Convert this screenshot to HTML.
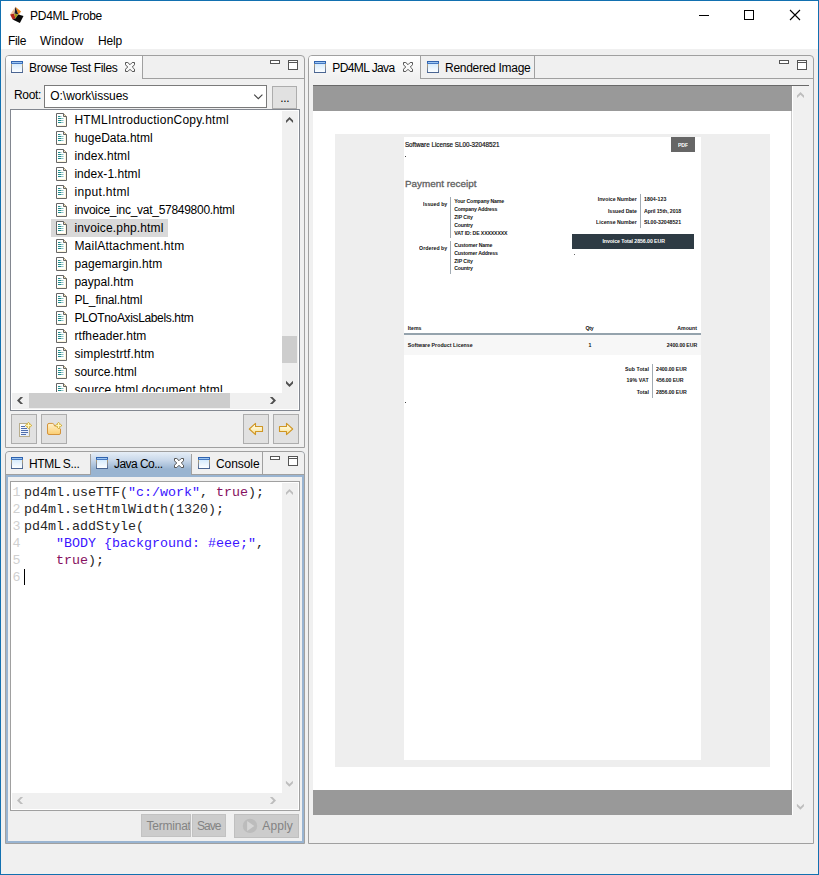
<!DOCTYPE html>
<html>
<head>
<meta charset="utf-8">
<title>PD4ML Probe</title>
<style>
*{box-sizing:border-box;margin:0;padding:0}
html,body{width:819px;height:875px;overflow:hidden;background:#f0f0f0}
body{font-family:"Liberation Sans",sans-serif;font-size:12px;color:#000;position:relative}
.abs{position:absolute}
.t{position:absolute;white-space:pre}
.pg .t{transform:scaleY(1.14)}

</style>
</head>
<body>
<div class="abs" style="left:0px;top:0px;width:819px;height:875px;background:#f0f0f0;"></div>
<div class="abs" style="left:0px;top:0px;width:819px;height:49px;background:#fff;"></div>
<svg class="abs" style="left:8px;top:4px" width="18" height="22" viewBox="8 4 18 22">
<polygon points="15.4,6.8 21.1,11.4 18.3,14.4" fill="#f08a1c"/>
<polygon points="15.4,6.8 18.3,14.4 14.2,13.4" fill="#1a1a26"/>
<polygon points="15.4,6.8 14.2,13.4 10.1,14.4" fill="#ecc09a"/>
<polygon points="10.1,14.4 14.2,13.4 15.4,18.4 12.6,19.4" fill="#b3241c"/>
<polygon points="14.2,13.4 18.3,14.4 15.4,18.4" fill="#a39a14"/>
<polygon points="18.3,14.4 21.1,11.4 19.6,15.0" fill="#ecc9a8"/>
<polygon points="12.6,19.4 15.4,18.4 18.3,14.4 23.5,15.9 19.9,22.9" fill="#080808"/>
</svg>
<div class="t" style="left:30px;top:8.4px;font-size:12px;line-height:16px;height:16px;letter-spacing:-0.267px;">PD4ML Probe</div>
<div class="abs" style="left:699px;top:15px;width:10px;height:1px;background:#000;"></div>
<div class="abs" style="left:744px;top:10px;width:10px;height:10px;border:1px solid #000"></div>
<svg class="abs" style="left:789px;top:9px" width="12" height="12" viewBox="0 0 12 12"><path d="M1 1 L11 11 M11 1 L1 11" stroke="#000" stroke-width="1.1" fill="none"/></svg>
<div class="t" style="left:8px;top:33.2px;font-size:12px;line-height:16px;height:16px;letter-spacing:-0.336px;">File</div>
<div class="t" style="left:40px;top:33.2px;font-size:12px;line-height:16px;height:16px;letter-spacing:0.135px;">Window</div>
<div class="t" style="left:98px;top:33.2px;font-size:12px;line-height:16px;height:16px;letter-spacing:-0.172px;">Help</div>
<div class="abs" style="left:5px;top:55px;width:300px;height:393px;background:#f0f0f0;border:1px solid #a0a0a0;border-radius:4px 4px 0 0"></div>
<div class="abs" style="left:6px;top:56px;width:136px;height:23px;background:linear-gradient(#fff,#f0f0f0);border-radius:3px 0 0 0"></div>
<div class="abs" style="left:142px;top:56px;width:1px;height:23px;background:#a0a0a0;"></div>
<div class="abs" style="left:142px;top:78px;width:162px;height:1px;background:#a0a0a0;"></div>
<svg class="abs" style="left:11px;top:61px" width="12" height="12" viewBox="0 0 12 12"><defs><linearGradient id="g11_61a" x1="0" y1="0" x2="0" y2="1"><stop offset="0" stop-color="#d6ebfd"/><stop offset="1" stop-color="#fcfeff"/></linearGradient><linearGradient id="g11_61b" x1="0" y1="0" x2="0" y2="1"><stop offset="0" stop-color="#b9a274"/><stop offset="0.6" stop-color="#6f7f9c"/><stop offset="1" stop-color="#4a6592"/></linearGradient></defs><rect x="0" y="3" width="12" height="9" fill="url(#g11_61b)"/><rect x="1" y="3" width="10" height="8" fill="url(#g11_61a)"/><rect x="0" y="0" width="12" height="3" fill="#2f62ae"/><rect x="1" y="1" width="10" height="1" fill="#9cc6f2"/><rect x="0" y="2" width="12" height="1" fill="#4477c0"/><rect x="0" y="11" width="12" height="1" fill="#4a6592"/></svg>
<div class="t" style="left:29px;top:60px;font-size:12px;line-height:16px;height:16px;letter-spacing:-0.312px;">Browse Test Files</div>
<svg class="abs" style="left:125px;top:62px" width="10" height="10" viewBox="0 0 10 10"><path d="M0.5 0.5 H2.8 L5 2.7 L7.2 0.5 H9.5 V2.8 L7.3 5 L9.5 7.2 V9.5 H7.2 L5 7.3 L2.8 9.5 H0.5 V7.2 L2.7 5 L0.5 2.8 Z" fill="none" stroke="#555" stroke-width="1"/></svg>
<div class="abs" style="left:270px;top:60px;width:10px;height:4px;background:#fff;border:1px solid #555"></div><div class="abs" style="left:288px;top:60px;width:10px;height:10px;background:#fff;border:1px solid #555"></div><div class="abs" style="left:289px;top:62px;width:8px;height:1px;background:#555;"></div>
<div class="t" style="left:14px;top:87.4px;font-size:12px;line-height:16px;height:16px;letter-spacing:-0.338px;">Root:</div>
<div class="abs" style="left:44px;top:85px;width:223px;height:23px;background:#fff;border:1px solid #7a7a7a"></div>
<div class="t" style="left:50.3px;top:88px;font-size:12px;line-height:16px;height:16px;letter-spacing:-0.049px;">O:\work\issues</div>
<svg class="abs" style="left:253px;top:93px" width="11" height="7" viewBox="0 0 11 7"><path d="M1.2 1.6 L5.3 5.7 L9.4 1.6" stroke="#444" stroke-width="1.1" fill="none"/></svg>
<div class="abs" style="left:272px;top:86px;width:25px;height:23px;background:#e1e1e1;border:1px solid #adadad"></div>
<div class="t" style="left:280.3px;top:89.5px;font-size:12px;line-height:16px;height:16px;letter-spacing:-0.339px;">...</div>
<div class="abs" style="left:10px;top:109px;width:290px;height:302px;background:#fff;border:1px solid #828790"></div>
<div class="abs" style="left:11px;top:110px;width:271px;height:282px;overflow:hidden">
<svg class="abs" style="left:45px;top:3px" width="12" height="14" viewBox="0 0 12 14"><path d="M0.5 0.5 H7.5 L10.5 3.5 V13.5 H0.5 Z" fill="#fff" stroke="#666"/><path d="M9.5 4 V12.5 H1.5" fill="none" stroke="#fbf6dc"/><path d="M7.5 0.5 V3.5 H10.5" fill="#f4e2b0" stroke="#666"/><path d="M2 3.5 H4 M2 5.5 H5.5 M2 7.5 H5.5 M2 9.5 H5.5" stroke="#1f8a8a" stroke-width="1"/><path d="M4 3.5 H5.5 M5.5 5.5 H7.5 M5.5 7.5 H7.5 M5.5 9.5 H7.5" stroke="#8cc4c4" stroke-width="1"/></svg>
<div class="t" style="left:63.4px;top:2px;font-size:12px;line-height:16px;height:16px;letter-spacing:0.236px;">HTMLIntroductionCopy.html</div>
<svg class="abs" style="left:45px;top:21px" width="12" height="14" viewBox="0 0 12 14"><path d="M0.5 0.5 H7.5 L10.5 3.5 V13.5 H0.5 Z" fill="#fff" stroke="#666"/><path d="M9.5 4 V12.5 H1.5" fill="none" stroke="#fbf6dc"/><path d="M7.5 0.5 V3.5 H10.5" fill="#f4e2b0" stroke="#666"/><path d="M2 3.5 H4 M2 5.5 H5.5 M2 7.5 H5.5 M2 9.5 H5.5" stroke="#1f8a8a" stroke-width="1"/><path d="M4 3.5 H5.5 M5.5 5.5 H7.5 M5.5 7.5 H7.5 M5.5 9.5 H7.5" stroke="#8cc4c4" stroke-width="1"/></svg>
<div class="t" style="left:63.4px;top:20px;font-size:12px;line-height:16px;height:16px;letter-spacing:0.012px;">hugeData.html</div>
<svg class="abs" style="left:45px;top:39px" width="12" height="14" viewBox="0 0 12 14"><path d="M0.5 0.5 H7.5 L10.5 3.5 V13.5 H0.5 Z" fill="#fff" stroke="#666"/><path d="M9.5 4 V12.5 H1.5" fill="none" stroke="#fbf6dc"/><path d="M7.5 0.5 V3.5 H10.5" fill="#f4e2b0" stroke="#666"/><path d="M2 3.5 H4 M2 5.5 H5.5 M2 7.5 H5.5 M2 9.5 H5.5" stroke="#1f8a8a" stroke-width="1"/><path d="M4 3.5 H5.5 M5.5 5.5 H7.5 M5.5 7.5 H7.5 M5.5 9.5 H7.5" stroke="#8cc4c4" stroke-width="1"/></svg>
<div class="t" style="left:63.4px;top:38px;font-size:12px;line-height:16px;height:16px;letter-spacing:0.080px;">index.html</div>
<svg class="abs" style="left:45px;top:57px" width="12" height="14" viewBox="0 0 12 14"><path d="M0.5 0.5 H7.5 L10.5 3.5 V13.5 H0.5 Z" fill="#fff" stroke="#666"/><path d="M9.5 4 V12.5 H1.5" fill="none" stroke="#fbf6dc"/><path d="M7.5 0.5 V3.5 H10.5" fill="#f4e2b0" stroke="#666"/><path d="M2 3.5 H4 M2 5.5 H5.5 M2 7.5 H5.5 M2 9.5 H5.5" stroke="#1f8a8a" stroke-width="1"/><path d="M4 3.5 H5.5 M5.5 5.5 H7.5 M5.5 7.5 H7.5 M5.5 9.5 H7.5" stroke="#8cc4c4" stroke-width="1"/></svg>
<div class="t" style="left:63.4px;top:56px;font-size:12px;line-height:16px;height:16px;letter-spacing:0.052px;">index-1.html</div>
<svg class="abs" style="left:45px;top:75px" width="12" height="14" viewBox="0 0 12 14"><path d="M0.5 0.5 H7.5 L10.5 3.5 V13.5 H0.5 Z" fill="#fff" stroke="#666"/><path d="M9.5 4 V12.5 H1.5" fill="none" stroke="#fbf6dc"/><path d="M7.5 0.5 V3.5 H10.5" fill="#f4e2b0" stroke="#666"/><path d="M2 3.5 H4 M2 5.5 H5.5 M2 7.5 H5.5 M2 9.5 H5.5" stroke="#1f8a8a" stroke-width="1"/><path d="M4 3.5 H5.5 M5.5 5.5 H7.5 M5.5 7.5 H7.5 M5.5 9.5 H7.5" stroke="#8cc4c4" stroke-width="1"/></svg>
<div class="t" style="left:63.4px;top:74px;font-size:12px;line-height:16px;height:16px;letter-spacing:0.347px;">input.html</div>
<svg class="abs" style="left:45px;top:93px" width="12" height="14" viewBox="0 0 12 14"><path d="M0.5 0.5 H7.5 L10.5 3.5 V13.5 H0.5 Z" fill="#fff" stroke="#666"/><path d="M9.5 4 V12.5 H1.5" fill="none" stroke="#fbf6dc"/><path d="M7.5 0.5 V3.5 H10.5" fill="#f4e2b0" stroke="#666"/><path d="M2 3.5 H4 M2 5.5 H5.5 M2 7.5 H5.5 M2 9.5 H5.5" stroke="#1f8a8a" stroke-width="1"/><path d="M4 3.5 H5.5 M5.5 5.5 H7.5 M5.5 7.5 H7.5 M5.5 9.5 H7.5" stroke="#8cc4c4" stroke-width="1"/></svg>
<div class="t" style="left:63.4px;top:92px;font-size:12px;line-height:16px;height:16px;letter-spacing:-0.280px;">invoice_inc_vat_57849800.html</div>
<div class="abs" style="left:40px;top:109px;width:117px;height:18px;background:#d9d9d9;"></div>
<svg class="abs" style="left:45px;top:111px" width="12" height="14" viewBox="0 0 12 14"><path d="M0.5 0.5 H7.5 L10.5 3.5 V13.5 H0.5 Z" fill="#fff" stroke="#666"/><path d="M9.5 4 V12.5 H1.5" fill="none" stroke="#fbf6dc"/><path d="M7.5 0.5 V3.5 H10.5" fill="#f4e2b0" stroke="#666"/><path d="M2 3.5 H4 M2 5.5 H5.5 M2 7.5 H5.5 M2 9.5 H5.5" stroke="#1f8a8a" stroke-width="1"/><path d="M4 3.5 H5.5 M5.5 5.5 H7.5 M5.5 7.5 H7.5 M5.5 9.5 H7.5" stroke="#8cc4c4" stroke-width="1"/></svg>
<div class="t" style="left:63.4px;top:110px;font-size:12px;line-height:16px;height:16px;letter-spacing:0.155px;">invoice.php.html</div>
<svg class="abs" style="left:45px;top:129px" width="12" height="14" viewBox="0 0 12 14"><path d="M0.5 0.5 H7.5 L10.5 3.5 V13.5 H0.5 Z" fill="#fff" stroke="#666"/><path d="M9.5 4 V12.5 H1.5" fill="none" stroke="#fbf6dc"/><path d="M7.5 0.5 V3.5 H10.5" fill="#f4e2b0" stroke="#666"/><path d="M2 3.5 H4 M2 5.5 H5.5 M2 7.5 H5.5 M2 9.5 H5.5" stroke="#1f8a8a" stroke-width="1"/><path d="M4 3.5 H5.5 M5.5 5.5 H7.5 M5.5 7.5 H7.5 M5.5 9.5 H7.5" stroke="#8cc4c4" stroke-width="1"/></svg>
<div class="t" style="left:63.4px;top:128px;font-size:12px;line-height:16px;height:16px;letter-spacing:0.220px;">MailAttachment.htm</div>
<svg class="abs" style="left:45px;top:147px" width="12" height="14" viewBox="0 0 12 14"><path d="M0.5 0.5 H7.5 L10.5 3.5 V13.5 H0.5 Z" fill="#fff" stroke="#666"/><path d="M9.5 4 V12.5 H1.5" fill="none" stroke="#fbf6dc"/><path d="M7.5 0.5 V3.5 H10.5" fill="#f4e2b0" stroke="#666"/><path d="M2 3.5 H4 M2 5.5 H5.5 M2 7.5 H5.5 M2 9.5 H5.5" stroke="#1f8a8a" stroke-width="1"/><path d="M4 3.5 H5.5 M5.5 5.5 H7.5 M5.5 7.5 H7.5 M5.5 9.5 H7.5" stroke="#8cc4c4" stroke-width="1"/></svg>
<div class="t" style="left:63.4px;top:146px;font-size:12px;line-height:16px;height:16px;letter-spacing:0.084px;">pagemargin.htm</div>
<svg class="abs" style="left:45px;top:165px" width="12" height="14" viewBox="0 0 12 14"><path d="M0.5 0.5 H7.5 L10.5 3.5 V13.5 H0.5 Z" fill="#fff" stroke="#666"/><path d="M9.5 4 V12.5 H1.5" fill="none" stroke="#fbf6dc"/><path d="M7.5 0.5 V3.5 H10.5" fill="#f4e2b0" stroke="#666"/><path d="M2 3.5 H4 M2 5.5 H5.5 M2 7.5 H5.5 M2 9.5 H5.5" stroke="#1f8a8a" stroke-width="1"/><path d="M4 3.5 H5.5 M5.5 5.5 H7.5 M5.5 7.5 H7.5 M5.5 9.5 H7.5" stroke="#8cc4c4" stroke-width="1"/></svg>
<div class="t" style="left:63.4px;top:164px;font-size:12px;line-height:16px;height:16px;letter-spacing:0.040px;">paypal.htm</div>
<svg class="abs" style="left:45px;top:183px" width="12" height="14" viewBox="0 0 12 14"><path d="M0.5 0.5 H7.5 L10.5 3.5 V13.5 H0.5 Z" fill="#fff" stroke="#666"/><path d="M9.5 4 V12.5 H1.5" fill="none" stroke="#fbf6dc"/><path d="M7.5 0.5 V3.5 H10.5" fill="#f4e2b0" stroke="#666"/><path d="M2 3.5 H4 M2 5.5 H5.5 M2 7.5 H5.5 M2 9.5 H5.5" stroke="#1f8a8a" stroke-width="1"/><path d="M4 3.5 H5.5 M5.5 5.5 H7.5 M5.5 7.5 H7.5 M5.5 9.5 H7.5" stroke="#8cc4c4" stroke-width="1"/></svg>
<div class="t" style="left:63.4px;top:182px;font-size:12px;line-height:16px;height:16px;letter-spacing:-0.113px;">PL_final.html</div>
<svg class="abs" style="left:45px;top:201px" width="12" height="14" viewBox="0 0 12 14"><path d="M0.5 0.5 H7.5 L10.5 3.5 V13.5 H0.5 Z" fill="#fff" stroke="#666"/><path d="M9.5 4 V12.5 H1.5" fill="none" stroke="#fbf6dc"/><path d="M7.5 0.5 V3.5 H10.5" fill="#f4e2b0" stroke="#666"/><path d="M2 3.5 H4 M2 5.5 H5.5 M2 7.5 H5.5 M2 9.5 H5.5" stroke="#1f8a8a" stroke-width="1"/><path d="M4 3.5 H5.5 M5.5 5.5 H7.5 M5.5 7.5 H7.5 M5.5 9.5 H7.5" stroke="#8cc4c4" stroke-width="1"/></svg>
<div class="t" style="left:63.4px;top:200px;font-size:12px;line-height:16px;height:16px;letter-spacing:-0.358px;">PLOTnoAxisLabels.htm</div>
<svg class="abs" style="left:45px;top:219px" width="12" height="14" viewBox="0 0 12 14"><path d="M0.5 0.5 H7.5 L10.5 3.5 V13.5 H0.5 Z" fill="#fff" stroke="#666"/><path d="M9.5 4 V12.5 H1.5" fill="none" stroke="#fbf6dc"/><path d="M7.5 0.5 V3.5 H10.5" fill="#f4e2b0" stroke="#666"/><path d="M2 3.5 H4 M2 5.5 H5.5 M2 7.5 H5.5 M2 9.5 H5.5" stroke="#1f8a8a" stroke-width="1"/><path d="M4 3.5 H5.5 M5.5 5.5 H7.5 M5.5 7.5 H7.5 M5.5 9.5 H7.5" stroke="#8cc4c4" stroke-width="1"/></svg>
<div class="t" style="left:63.4px;top:218px;font-size:12px;line-height:16px;height:16px;letter-spacing:0.106px;">rtfheader.htm</div>
<svg class="abs" style="left:45px;top:237px" width="12" height="14" viewBox="0 0 12 14"><path d="M0.5 0.5 H7.5 L10.5 3.5 V13.5 H0.5 Z" fill="#fff" stroke="#666"/><path d="M9.5 4 V12.5 H1.5" fill="none" stroke="#fbf6dc"/><path d="M7.5 0.5 V3.5 H10.5" fill="#f4e2b0" stroke="#666"/><path d="M2 3.5 H4 M2 5.5 H5.5 M2 7.5 H5.5 M2 9.5 H5.5" stroke="#1f8a8a" stroke-width="1"/><path d="M4 3.5 H5.5 M5.5 5.5 H7.5 M5.5 7.5 H7.5 M5.5 9.5 H7.5" stroke="#8cc4c4" stroke-width="1"/></svg>
<div class="t" style="left:63.4px;top:236px;font-size:12px;line-height:16px;height:16px;letter-spacing:0.126px;">simplestrtf.htm</div>
<svg class="abs" style="left:45px;top:255px" width="12" height="14" viewBox="0 0 12 14"><path d="M0.5 0.5 H7.5 L10.5 3.5 V13.5 H0.5 Z" fill="#fff" stroke="#666"/><path d="M9.5 4 V12.5 H1.5" fill="none" stroke="#fbf6dc"/><path d="M7.5 0.5 V3.5 H10.5" fill="#f4e2b0" stroke="#666"/><path d="M2 3.5 H4 M2 5.5 H5.5 M2 7.5 H5.5 M2 9.5 H5.5" stroke="#1f8a8a" stroke-width="1"/><path d="M4 3.5 H5.5 M5.5 5.5 H7.5 M5.5 7.5 H7.5 M5.5 9.5 H7.5" stroke="#8cc4c4" stroke-width="1"/></svg>
<div class="t" style="left:63.4px;top:254px;font-size:12px;line-height:16px;height:16px;letter-spacing:0.024px;">source.html</div>
<svg class="abs" style="left:45px;top:273px" width="12" height="14" viewBox="0 0 12 14"><path d="M0.5 0.5 H7.5 L10.5 3.5 V13.5 H0.5 Z" fill="#fff" stroke="#666"/><path d="M9.5 4 V12.5 H1.5" fill="none" stroke="#fbf6dc"/><path d="M7.5 0.5 V3.5 H10.5" fill="#f4e2b0" stroke="#666"/><path d="M2 3.5 H4 M2 5.5 H5.5 M2 7.5 H5.5 M2 9.5 H5.5" stroke="#1f8a8a" stroke-width="1"/><path d="M4 3.5 H5.5 M5.5 5.5 H7.5 M5.5 7.5 H7.5 M5.5 9.5 H7.5" stroke="#8cc4c4" stroke-width="1"/></svg>
<div class="t" style="left:63.4px;top:272px;font-size:12px;line-height:16px;height:16px;letter-spacing:0.177px;">source.html.document.html</div>
</div>
<div class="abs" style="left:282px;top:111px;width:16px;height:282px;background:#f0f0f0;"></div>
<div class="abs" style="left:282px;top:336px;width:15px;height:27px;background:#cdcdcd;"></div>
<svg class="abs" style="left:283px;top:113px" width="12" height="12" viewBox="0 0 12 12"><polygon points="3.05,7.40 6.55,3.90 10.05,7.40 10.05,10.00 6.55,6.60 3.05,10.00" fill="#505050"/></svg>
<svg class="abs" style="left:283px;top:377px" width="12" height="12" viewBox="0 0 12 12"><polygon points="3.00,6.40 6.50,9.90 10.00,6.40 10.00,3.80 6.50,7.20 3.00,3.80" fill="#505050"/></svg>
<div class="abs" style="left:12px;top:393px;width:286px;height:16px;background:#f0f0f0;"></div>
<div class="abs" style="left:29px;top:393px;width:201px;height:15px;background:#cdcdcd;"></div>
<svg class="abs" style="left:14px;top:394px" width="12" height="12" viewBox="0 0 12 12"><polygon points="6.50,2.95 3.00,6.45 6.50,9.95 9.10,9.95 5.70,6.45 9.10,2.95" fill="#505050"/></svg>
<svg class="abs" style="left:267px;top:394px" width="12" height="12" viewBox="0 0 12 12"><polygon points="5.50,2.90 9.00,6.40 5.50,9.90 2.90,9.90 6.30,6.40 2.90,2.90" fill="#505050"/></svg>
<div class="abs" style="left:11px;top:414px;width:26px;height:30px;background:#e1e1e1;border:1px solid #adadad"></div>
<div class="abs" style="left:41px;top:414px;width:26px;height:30px;background:#e1e1e1;border:1px solid #adadad"></div>
<div class="abs" style="left:243px;top:414px;width:26px;height:30px;background:#e1e1e1;border:1px solid #adadad"></div>
<div class="abs" style="left:273px;top:414px;width:26px;height:30px;background:#e1e1e1;border:1px solid #adadad"></div>
<svg class="abs" style="left:8px;top:410px" width="64" height="38" viewBox="8 410 64 38"><defs><linearGradient id="docg" x1="0" y1="0" x2="1" y2="1"><stop offset="0" stop-color="#fff"/><stop offset="1" stop-color="#dfe8f8"/></linearGradient><linearGradient id="folg" x1="0" y1="0" x2="0" y2="1"><stop offset="0" stop-color="#fff2cc"/><stop offset="1" stop-color="#fbcd70"/></linearGradient><linearGradient id="arrg" x1="0" y1="0" x2="0" y2="1"><stop offset="0" stop-color="#fffdf0"/><stop offset="0.5" stop-color="#fdf2c4"/><stop offset="1" stop-color="#f8da84"/></linearGradient></defs><rect x="19.5" y="423.5" width="10" height="13" fill="url(#docg)" stroke="#b8ad8c"/><path d="M21 426.5 H25 M21 428.5 H27 M21 430.5 H28 M21 432.5 H28 M21 434.5 H26" stroke="#4f6fad" stroke-width="1"/><polygon points="28.5,421.9 32.1,425.5 28.5,429.1 24.9,425.5" fill="#cfa92c"/><path d="M28.5 423.1 V427.9 M26.1 425.5 H30.9" stroke="#fff6c0" stroke-width="1.3"/><path d="M47.5 425 Q47.5 423.4 49 423.4 H52.3 Q53.6 423.4 54 424.6 L54.6 426 H57 L60.5 429 V433 Q60.5 434.5 59 434.5 H49 Q47.5 434.5 47.5 433 Z" fill="url(#folg)" stroke="#d3933c"/><polygon points="58.6,421.9 62.2,425.5 58.6,429.1 55.0,425.5" fill="#cfa92c"/><path d="M58.6 423.1 V427.9 M56.2 425.5 H61.0" stroke="#fff6c0" stroke-width="1.3"/></svg>
<svg class="abs" style="left:240px;top:410px" width="64" height="38" viewBox="240 410 64 38"><path d="M249.3 429 L255.5 423.4 V426.5 H262.5 V431.5 H255.5 V434.6 Z" fill="url(#arrg)" stroke="#cf9624" stroke-width="1.1" stroke-linejoin="round"/><path d="M292.7 429 L286.5 423.4 V426.5 H279.5 V431.5 H286.5 V434.6 Z" fill="url(#arrg)" stroke="#cf9624" stroke-width="1.1" stroke-linejoin="round"/></svg>
<div class="abs" style="left:5px;top:451px;width:300px;height:393px;background:#99b4d1;border:1px solid #a0a0a0;border-radius:4px 4px 0 0"></div>
<div class="abs" style="left:6px;top:452px;width:298px;height:22px;background:#f0f0f0;border-radius:3px 3px 0 0"></div>
<div class="abs" style="left:91px;top:452px;width:100px;height:25px;background:linear-gradient(#e6eef7 0px,#c9d8ea 8px,#99b4d1 17px,#99b4d1 25px);border-radius:4px 4px 0 0"></div>
<div class="abs" style="left:90px;top:454px;width:1px;height:21px;background:#a0a0a0;"></div>
<div class="abs" style="left:191px;top:454px;width:1px;height:21px;background:#a0a0a0;"></div>
<div class="abs" style="left:262px;top:452px;width:1px;height:23px;background:#a0a0a0;"></div>
<div class="abs" style="left:6px;top:474px;width:85px;height:1px;background:#a0a0a0;"></div>
<div class="abs" style="left:191px;top:474px;width:113px;height:1px;background:#a0a0a0;"></div>
<svg class="abs" style="left:11px;top:457px" width="12" height="12" viewBox="0 0 12 12"><defs><linearGradient id="g11_457a" x1="0" y1="0" x2="0" y2="1"><stop offset="0" stop-color="#d6ebfd"/><stop offset="1" stop-color="#fcfeff"/></linearGradient><linearGradient id="g11_457b" x1="0" y1="0" x2="0" y2="1"><stop offset="0" stop-color="#b9a274"/><stop offset="0.6" stop-color="#6f7f9c"/><stop offset="1" stop-color="#4a6592"/></linearGradient></defs><rect x="0" y="3" width="12" height="9" fill="url(#g11_457b)"/><rect x="1" y="3" width="10" height="8" fill="url(#g11_457a)"/><rect x="0" y="0" width="12" height="3" fill="#2f62ae"/><rect x="1" y="1" width="10" height="1" fill="#9cc6f2"/><rect x="0" y="2" width="12" height="1" fill="#4477c0"/><rect x="0" y="11" width="12" height="1" fill="#4a6592"/></svg>
<div class="t" style="left:29px;top:456px;font-size:12px;line-height:16px;height:16px;letter-spacing:-0.340px;">HTML S...</div>
<svg class="abs" style="left:96px;top:457px" width="12" height="12" viewBox="0 0 12 12"><defs><linearGradient id="g96_457a" x1="0" y1="0" x2="0" y2="1"><stop offset="0" stop-color="#d6ebfd"/><stop offset="1" stop-color="#fcfeff"/></linearGradient><linearGradient id="g96_457b" x1="0" y1="0" x2="0" y2="1"><stop offset="0" stop-color="#b9a274"/><stop offset="0.6" stop-color="#6f7f9c"/><stop offset="1" stop-color="#4a6592"/></linearGradient></defs><rect x="0" y="3" width="12" height="9" fill="url(#g96_457b)"/><rect x="1" y="3" width="10" height="8" fill="url(#g96_457a)"/><rect x="0" y="0" width="12" height="3" fill="#2f62ae"/><rect x="1" y="1" width="10" height="1" fill="#9cc6f2"/><rect x="0" y="2" width="12" height="1" fill="#4477c0"/><rect x="0" y="11" width="12" height="1" fill="#4a6592"/></svg>
<div class="t" style="left:114px;top:456px;font-size:12px;line-height:16px;height:16px;letter-spacing:-0.553px;">Java Co...</div>
<svg class="abs" style="left:174px;top:458px" width="10" height="10" viewBox="0 0 10 10"><path d="M0.5 0.5 H2.8 L5 2.7 L7.2 0.5 H9.5 V2.8 L7.3 5 L9.5 7.2 V9.5 H7.2 L5 7.3 L2.8 9.5 H0.5 V7.2 L2.7 5 L0.5 2.8 Z" fill="#fff" stroke="#555" stroke-width="1"/></svg>
<svg class="abs" style="left:198px;top:457px" width="12" height="12" viewBox="0 0 12 12"><defs><linearGradient id="g198_457a" x1="0" y1="0" x2="0" y2="1"><stop offset="0" stop-color="#d6ebfd"/><stop offset="1" stop-color="#fcfeff"/></linearGradient><linearGradient id="g198_457b" x1="0" y1="0" x2="0" y2="1"><stop offset="0" stop-color="#b9a274"/><stop offset="0.6" stop-color="#6f7f9c"/><stop offset="1" stop-color="#4a6592"/></linearGradient></defs><rect x="0" y="3" width="12" height="9" fill="url(#g198_457b)"/><rect x="1" y="3" width="10" height="8" fill="url(#g198_457a)"/><rect x="0" y="0" width="12" height="3" fill="#2f62ae"/><rect x="1" y="1" width="10" height="1" fill="#9cc6f2"/><rect x="0" y="2" width="12" height="1" fill="#4477c0"/><rect x="0" y="11" width="12" height="1" fill="#4a6592"/></svg>
<div class="t" style="left:216px;top:456px;font-size:12px;line-height:16px;height:16px;letter-spacing:-0.076px;">Console</div>
<div class="abs" style="left:270px;top:456px;width:10px;height:4px;background:#fff;border:1px solid #555"></div><div class="abs" style="left:288px;top:456px;width:10px;height:10px;background:#fff;border:1px solid #555"></div><div class="abs" style="left:289px;top:458px;width:8px;height:1px;background:#555;"></div>
<div class="abs" style="left:8px;top:477px;width:294px;height:364px;background:#f0f0f0;"></div>
<div class="abs" style="left:10px;top:481px;width:290px;height:330px;background:#fff;border:1px solid #a0a0a0"></div>
<div class="t" style="left:12.5px;top:484px;font-family:'Liberation Mono',monospace;font-size:13.33px;color:#d0d0d0;line-height:17px;height:17px">1</div>
<div class="t" style="left:24px;top:484px;font-family:'Liberation Mono',monospace;font-size:13.33px;line-height:17px;height:17px;white-space:pre"><span style="color:#262626">pd4ml.useTTF(</span><span style="color:#3a14ff">"c:/work"</span><span style="color:#262626">, </span><span style="color:#861060">true</span><span style="color:#262626">);</span></div>
<div class="t" style="left:12.5px;top:501px;font-family:'Liberation Mono',monospace;font-size:13.33px;color:#d0d0d0;line-height:17px;height:17px">2</div>
<div class="t" style="left:24px;top:501px;font-family:'Liberation Mono',monospace;font-size:13.33px;line-height:17px;height:17px;white-space:pre"><span style="color:#262626">pd4ml.setHtmlWidth(1320);</span></div>
<div class="t" style="left:12.5px;top:518px;font-family:'Liberation Mono',monospace;font-size:13.33px;color:#d0d0d0;line-height:17px;height:17px">3</div>
<div class="t" style="left:24px;top:518px;font-family:'Liberation Mono',monospace;font-size:13.33px;line-height:17px;height:17px;white-space:pre"><span style="color:#262626">pd4ml.addStyle(</span></div>
<div class="t" style="left:12.5px;top:535px;font-family:'Liberation Mono',monospace;font-size:13.33px;color:#d0d0d0;line-height:17px;height:17px">4</div>
<div class="t" style="left:24px;top:535px;font-family:'Liberation Mono',monospace;font-size:13.33px;line-height:17px;height:17px;white-space:pre"><span style="color:#262626">    </span><span style="color:#3a14ff">"BODY {background: #eee;"</span><span style="color:#262626">,</span></div>
<div class="t" style="left:12.5px;top:552px;font-family:'Liberation Mono',monospace;font-size:13.33px;color:#d0d0d0;line-height:17px;height:17px">5</div>
<div class="t" style="left:24px;top:552px;font-family:'Liberation Mono',monospace;font-size:13.33px;line-height:17px;height:17px;white-space:pre"><span style="color:#262626">    </span><span style="color:#861060">true</span><span style="color:#262626">);</span></div>
<div class="t" style="left:12.5px;top:569px;font-family:'Liberation Mono',monospace;font-size:13.33px;color:#d0d0d0;line-height:17px;height:17px">6</div>
<div class="t" style="left:24px;top:569px;font-family:'Liberation Mono',monospace;font-size:13.33px;line-height:17px;height:17px;white-space:pre"><span style="color:#262626"></span></div>
<div class="abs" style="left:24px;top:569px;width:1px;height:16px;background:#000;"></div>
<div class="abs" style="left:282px;top:483px;width:16px;height:310px;background:#f0f0f0;"></div>
<div class="abs" style="left:12px;top:793px;width:286px;height:16px;background:#f0f0f0;"></div>
<svg class="abs" style="left:283px;top:485px" width="12" height="12" viewBox="0 0 12 12"><polygon points="3.00,7.40 6.50,3.90 10.00,7.40 10.00,10.00 6.50,6.60 3.00,10.00" fill="#bdbdbd"/></svg>
<svg class="abs" style="left:283px;top:777px" width="12" height="12" viewBox="0 0 12 12"><polygon points="2.90,6.30 6.40,9.80 9.90,6.30 9.90,3.70 6.40,7.10 2.90,3.70" fill="#bdbdbd"/></svg>
<svg class="abs" style="left:14px;top:794px" width="12" height="12" viewBox="0 0 12 12"><polygon points="6.50,2.90 3.00,6.40 6.50,9.90 9.10,9.90 5.70,6.40 9.10,2.90" fill="#bdbdbd"/></svg>
<svg class="abs" style="left:267px;top:794px" width="12" height="12" viewBox="0 0 12 12"><polygon points="5.50,2.90 9.00,6.40 5.50,9.90 2.90,9.90 6.30,6.40 2.90,2.90" fill="#bdbdbd"/></svg>
<div class="abs" style="left:141px;top:814px;width:50px;height:23px;background:#cccccc;border:1px solid #c2c2c2"></div>
<div class="abs" style="left:192px;top:814px;width:34px;height:23px;background:#cccccc;border:1px solid #c2c2c2"></div>
<div class="abs" style="left:234px;top:814px;width:65px;height:24px;background:#cccccc;border:1px solid #bfbfbf"></div>
<div class="abs" style="left:142px;top:815px;width:48.4px;height:21px;overflow:hidden"><div class="t" style="left:4.6px;top:2.6px;font-size:12px;line-height:16px;height:16px;letter-spacing:-0.243px;color:#838383;">Terminate</div></div>
<div class="t" style="left:196.9px;top:817.6px;font-size:12px;line-height:16px;height:16px;letter-spacing:-0.940px;color:#838383;">Save</div>
<div class="t" style="left:262.3px;top:817.9px;font-size:12px;line-height:16px;height:16px;letter-spacing:0.094px;color:#838383;">Apply</div>
<svg class="abs" style="left:242px;top:818px" width="16" height="16" viewBox="242 818 16 16"><circle cx="250" cy="825.9" r="7.2" fill="#bcbcbc"/><path d="M247.1 820.9 L254.3 826 L247.1 831.1 Z" fill="#d6d6d6"/></svg>
<div class="abs" style="left:308px;top:55px;width:506px;height:789px;background:#f0f0f0;border:1px solid #a0a0a0;border-radius:4px 4px 0 0"></div>
<div class="abs" style="left:309px;top:56px;width:111px;height:23px;background:linear-gradient(#fff,#f0f0f0);border-radius:3px 0 0 0"></div>
<div class="abs" style="left:420px;top:56px;width:1px;height:23px;background:#a0a0a0;"></div>
<div class="abs" style="left:534px;top:56px;width:1px;height:23px;background:#a0a0a0;"></div>
<div class="abs" style="left:420px;top:78px;width:393px;height:1px;background:#a0a0a0;"></div>
<svg class="abs" style="left:314px;top:61px" width="12" height="12" viewBox="0 0 12 12"><defs><linearGradient id="g314_61a" x1="0" y1="0" x2="0" y2="1"><stop offset="0" stop-color="#d6ebfd"/><stop offset="1" stop-color="#fcfeff"/></linearGradient><linearGradient id="g314_61b" x1="0" y1="0" x2="0" y2="1"><stop offset="0" stop-color="#b9a274"/><stop offset="0.6" stop-color="#6f7f9c"/><stop offset="1" stop-color="#4a6592"/></linearGradient></defs><rect x="0" y="3" width="12" height="9" fill="url(#g314_61b)"/><rect x="1" y="3" width="10" height="8" fill="url(#g314_61a)"/><rect x="0" y="0" width="12" height="3" fill="#2f62ae"/><rect x="1" y="1" width="10" height="1" fill="#9cc6f2"/><rect x="0" y="2" width="12" height="1" fill="#4477c0"/><rect x="0" y="11" width="12" height="1" fill="#4a6592"/></svg>
<div class="t" style="left:332.3px;top:60px;font-size:12px;line-height:16px;height:16px;letter-spacing:-0.595px;">PD4ML Java</div>
<svg class="abs" style="left:403px;top:62px" width="10" height="10" viewBox="0 0 10 10"><path d="M0.5 0.5 H2.8 L5 2.7 L7.2 0.5 H9.5 V2.8 L7.3 5 L9.5 7.2 V9.5 H7.2 L5 7.3 L2.8 9.5 H0.5 V7.2 L2.7 5 L0.5 2.8 Z" fill="none" stroke="#555" stroke-width="1"/></svg>
<svg class="abs" style="left:427px;top:61px" width="12" height="12" viewBox="0 0 12 12"><defs><linearGradient id="g427_61a" x1="0" y1="0" x2="0" y2="1"><stop offset="0" stop-color="#d6ebfd"/><stop offset="1" stop-color="#fcfeff"/></linearGradient><linearGradient id="g427_61b" x1="0" y1="0" x2="0" y2="1"><stop offset="0" stop-color="#b9a274"/><stop offset="0.6" stop-color="#6f7f9c"/><stop offset="1" stop-color="#4a6592"/></linearGradient></defs><rect x="0" y="3" width="12" height="9" fill="url(#g427_61b)"/><rect x="1" y="3" width="10" height="8" fill="url(#g427_61a)"/><rect x="0" y="0" width="12" height="3" fill="#2f62ae"/><rect x="1" y="1" width="10" height="1" fill="#9cc6f2"/><rect x="0" y="2" width="12" height="1" fill="#4477c0"/><rect x="0" y="11" width="12" height="1" fill="#4a6592"/></svg>
<div class="t" style="left:445px;top:60px;font-size:12px;line-height:16px;height:16px;letter-spacing:-0.278px;">Rendered Image</div>
<div class="abs" style="left:779px;top:60px;width:10px;height:4px;background:#fff;border:1px solid #555"></div><div class="abs" style="left:797px;top:60px;width:10px;height:10px;background:#fff;border:1px solid #555"></div><div class="abs" style="left:798px;top:62px;width:8px;height:1px;background:#555;"></div>
<div class="abs" style="left:313px;top:85px;width:496px;height:1px;background:#696969;"></div>
<div class="abs" style="left:313px;top:86px;width:479px;height:729px;background:#fff;"></div>
<div class="abs" style="left:313px;top:86px;width:479px;height:25px;background:#999;"></div>
<div class="abs" style="left:313px;top:790px;width:479px;height:25px;background:#999;"></div>
<div class="abs" style="left:792px;top:86px;width:17px;height:729px;background:#f0f0f0;"></div>
<div class="abs" style="left:792px;top:86px;width:1px;height:729px;background:#fff;"></div>
<div class="abs" style="left:791px;top:111px;width:1px;height:679px;background:#cacaca;"></div>
<svg class="abs" style="left:794px;top:89px" width="12" height="12" viewBox="0 0 12 12"><polygon points="3.00,6.50 6.50,3.00 10.00,6.50 10.00,9.10 6.50,5.70 3.00,9.10" fill="#bdbdbd"/></svg>
<svg class="abs" style="left:794px;top:800px" width="12" height="12" viewBox="0 0 12 12"><polygon points="2.90,6.30 6.40,9.80 9.90,6.30 9.90,3.70 6.40,7.10 2.90,3.70" fill="#bdbdbd"/></svg>
<div class="abs" style="left:335px;top:134px;width:435px;height:633px;background:#eee;"></div>
<div class="abs" style="left:404px;top:137px;width:297px;height:623px;background:#fff;"></div>
<div class="pg"><div class="t" style="-webkit-text-stroke:0.18px #111;left:404.9px;top:141.2px;font-size:6.3px;line-height:8px;height:8px;letter-spacing:-0.006px;color:#111;">Software License SL00-32048521</div>
<div class="abs" style="left:405px;top:156px;width:1px;height:1px;background:#444;"></div>
<div class="abs" style="left:671px;top:137px;width:24px;height:15px;background:#666;"></div>
<div class="t" style="left:678px;top:140.5px;font-size:5.2px;line-height:8px;height:8px;letter-spacing:-0.125px;font-weight:bold;color:#fff;">PDF</div>
<div class="t" style="left:404.9px;top:177px;font-size:9.9px;line-height:14px;height:14px;letter-spacing:0.023px;color:#606060;-webkit-text-stroke:0.3px #606060;transform:none;">Payment receipt</div>
<div class="t" style="left:423px;top:200.0px;font-size:5.2px;line-height:8px;height:8px;letter-spacing:0.040px;font-weight:bold;color:#111;">Issued by</div>
<div class="t" style="left:419.1px;top:244.2px;font-size:5.2px;line-height:8px;height:8px;letter-spacing:0.051px;font-weight:bold;color:#111;">Ordered by</div>
<div class="abs" style="left:450px;top:197px;width:1px;height:41px;background:#a2abb3;"></div>
<div class="abs" style="left:450px;top:241px;width:1px;height:33px;background:#a2abb3;"></div>
<div class="t" style="left:454.3px;top:197.1px;font-size:5.2px;line-height:8px;height:8px;letter-spacing:-0.134px;font-weight:bold;color:#111;">Your Company Name</div>
<div class="t" style="left:454.3px;top:205.1px;font-size:5.2px;line-height:8px;height:8px;letter-spacing:-0.190px;font-weight:bold;color:#111;">Company Address</div>
<div class="t" style="left:454.3px;top:213.1px;font-size:5.2px;line-height:8px;height:8px;letter-spacing:-0.102px;font-weight:bold;color:#111;">ZIP City</div>
<div class="t" style="left:454.3px;top:221.2px;font-size:5.2px;line-height:8px;height:8px;letter-spacing:-0.213px;font-weight:bold;color:#111;">Country</div>
<div class="t" style="left:454.3px;top:229.0px;font-size:5.2px;line-height:8px;height:8px;letter-spacing:-0.139px;font-weight:bold;color:#111;">VAT ID: DE XXXXXXXX</div>
<div class="t" style="left:454.3px;top:241.1px;font-size:5.2px;line-height:8px;height:8px;letter-spacing:-0.146px;font-weight:bold;color:#111;">Customer Name</div>
<div class="t" style="left:454.3px;top:249.1px;font-size:5.2px;line-height:8px;height:8px;letter-spacing:-0.176px;font-weight:bold;color:#111;">Customer Address</div>
<div class="t" style="left:454.3px;top:256.9px;font-size:5.2px;line-height:8px;height:8px;letter-spacing:-0.102px;font-weight:bold;color:#111;">ZIP City</div>
<div class="t" style="left:454.3px;top:264.3px;font-size:5.2px;line-height:8px;height:8px;letter-spacing:-0.213px;font-weight:bold;color:#111;">Country</div>
<div class="t" style="left:597.7px;top:194.8px;font-size:5.2px;line-height:8px;height:8px;letter-spacing:0.013px;font-weight:bold;color:#111;">Invoice Number</div>
<div class="t" style="left:607.9px;top:207.0px;font-size:5.2px;line-height:8px;height:8px;letter-spacing:-0.020px;font-weight:bold;color:#111;">Issued Date</div>
<div class="t" style="left:596.1px;top:218.1px;font-size:5.2px;line-height:8px;height:8px;letter-spacing:0.023px;font-weight:bold;color:#111;">License Number</div>
<div class="abs" style="left:640px;top:194px;width:1px;height:34px;background:#a2abb3;"></div>
<div class="t" style="left:644px;top:194.8px;font-size:5.2px;line-height:8px;height:8px;letter-spacing:0.058px;font-weight:bold;color:#111;">1804-123</div>
<div class="t" style="left:644px;top:207.0px;font-size:5.2px;line-height:8px;height:8px;letter-spacing:-0.079px;font-weight:bold;color:#111;">April 15th, 2018</div>
<div class="t" style="left:644px;top:218.1px;font-size:5.2px;line-height:8px;height:8px;letter-spacing:-0.009px;font-weight:bold;color:#111;">SL00-32048521</div>
<div class="abs" style="left:572px;top:234px;width:122px;height:15px;background:#2e3b44;"></div>
<div class="t" style="left:602.4px;top:237.2px;font-size:5.2px;line-height:8px;height:8px;letter-spacing:-0.057px;font-weight:bold;color:#fff;">Invoice Total 2856.00 EUR</div>
<div class="abs" style="left:574px;top:254px;width:1px;height:1px;background:#666;"></div>
<div class="t" style="left:407.8px;top:324.3px;font-size:5.2px;line-height:8px;height:8px;letter-spacing:0.027px;font-weight:bold;color:#111;">Items</div>
<div class="t" style="left:585.4px;top:324.3px;font-size:5.2px;line-height:8px;height:8px;letter-spacing:-0.152px;font-weight:bold;color:#111;">Qty</div>
<div class="t" style="left:677.2px;top:324.3px;font-size:5.2px;line-height:8px;height:8px;letter-spacing:0.051px;font-weight:bold;color:#111;">Amount</div>
<div class="abs" style="left:404px;top:333px;width:297px;height:2px;background:#95a3ad;"></div>
<div class="abs" style="left:404px;top:335px;width:297px;height:20px;background:#f7f7f7;"></div>
<div class="t" style="left:407.8px;top:341.3px;font-size:5.2px;line-height:8px;height:8px;letter-spacing:0.049px;font-weight:bold;color:#111;">Software Product License</div>
<div class="t" style="left:588.5px;top:341.3px;font-size:5.2px;line-height:8px;height:8px;font-weight:bold;color:#111;">1</div>
<div class="t" style="left:666.8px;top:341.3px;font-size:5.2px;line-height:8px;height:8px;letter-spacing:-0.078px;font-weight:bold;color:#111;">2400.00 EUR</div>
<div class="t" style="left:625px;top:364.7px;font-size:5.2px;line-height:8px;height:8px;letter-spacing:0.072px;font-weight:bold;color:#111;">Sub Total</div>
<div class="t" style="left:626.4px;top:375.8px;font-size:5.2px;line-height:8px;height:8px;letter-spacing:0.152px;font-weight:bold;color:#111;">19% VAT</div>
<div class="t" style="left:636.8px;top:388.0px;font-size:5.2px;line-height:8px;height:8px;letter-spacing:0.017px;font-weight:bold;color:#111;">Total</div>
<div class="abs" style="left:652px;top:364px;width:1px;height:34px;background:#a2abb3;"></div>
<div class="t" style="left:656.1px;top:364.7px;font-size:5.2px;line-height:8px;height:8px;letter-spacing:-0.060px;font-weight:bold;color:#111;">2400.00 EUR</div>
<div class="t" style="left:656.1px;top:375.8px;font-size:5.2px;line-height:8px;height:8px;letter-spacing:-0.097px;font-weight:bold;color:#111;">456.00 EUR</div>
<div class="t" style="left:656.1px;top:388.0px;font-size:5.2px;line-height:8px;height:8px;letter-spacing:-0.060px;font-weight:bold;color:#111;">2856.00 EUR</div>
<div class="abs" style="left:405px;top:402px;width:1px;height:1px;background:#444;"></div></div>
<div class="abs" style="left:0px;top:0px;width:819px;height:1px;background:#1270b0;"></div>
<div class="abs" style="left:0px;top:874px;width:819px;height:1px;background:#1270b0;"></div>
<div class="abs" style="left:0px;top:0px;width:1px;height:875px;background:#1270b0;"></div>
<div class="abs" style="left:818px;top:0px;width:1px;height:875px;background:#1270b0;"></div>
</body>
</html>
